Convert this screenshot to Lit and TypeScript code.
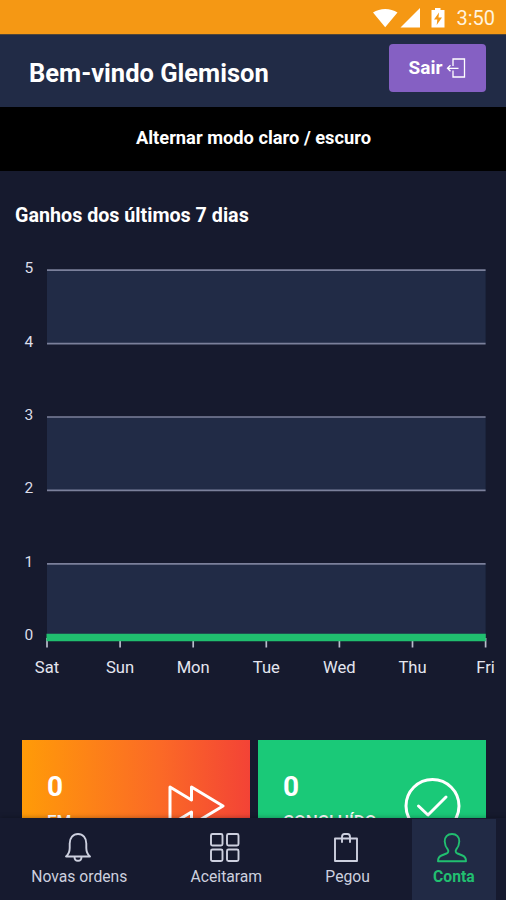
import { LitElement, html, svg, css } from "lit";
import { customElement } from "lit/decorators.js";

const DAYS = ["Sat", "Sun", "Mon", "Tue", "Wed", "Thu", "Fri"];
const LEVELS = [5, 4, 3, 2, 1, 0];

@customElement("earnings-chart")
class EarningsChart extends LitElement {
  static styles = css`
    :host { display: block; }
    .chart { display: block; }
    .band { fill: #212b46; }
    .line { stroke: #7b809b; stroke-width: 1.7; }
    .tick { stroke: #b9bccb; stroke-width: 1.7; }
    .series { stroke: #20bf6f; stroke-width: 7.5; }
    .label { fill: #dcdeea; font: 400 15.5px Roboto, sans-serif; }
    .day { fill: #e4e6f0; font: 400 16.6px Roboto, sans-serif; text-anchor: middle; }
  `;
  render() {
    const y = (v: number) => 20.2 + (5 - v) * 73.4;
    const x = (i: number) => 47 + i * 73.1;
    return html`<svg class="chart" width="506" height="440" viewBox="0 0 506 440">
      ${[5, 3, 1].map((v) => svg`<rect class="band" x="47" y=${y(v)} width="438.6" height="73.4"></rect>`)}
      ${LEVELS.slice(0, 5).map((v) => svg`<line class="line" x1="47" x2="485.6" y1=${y(v)} y2=${y(v)}></line>`)}
      ${LEVELS.map((v) => svg`<text class="label" x="24.5" y=${y(v) + 3}>${v}</text>`)}
      ${DAYS.map((d, i) => svg`<line class="tick" x1=${x(i)} x2=${x(i)} y1="388" y2="397.5"></line>
        <text class="day" x=${x(i)} y="423">${d}</text>`)}
      <line class="series" x1="46.5" x2="485.8" y1="387.5" y2="387.5"></line>
    </svg>`;
  }
}

const bell = svg`<path d="M3 24.5H27C24.3 22.3 23.3 20 23.3 16V11.5C23.3 6 20 2 15 2S6.7 6 6.7 11.5V16C6.7 20 5.7 22.3 3 24.5ZM11.5 25C11.5 27.3 13 28.8 15 28.8S18.5 27.3 18.5 25"></path>`;
const grid = svg`<rect x="1" y="2" width="11.5" height="11.5" rx="1.5"></rect><rect x="17" y="2" width="11.5" height="11.5" rx="1.5"></rect><rect x="1" y="17.5" width="11.5" height="11.5" rx="1.5"></rect><rect x="17" y="17.5" width="11.5" height="11.5" rx="1.5"></rect>`;
const bag = svg`<path d="M4 6.500H26V29H4ZM11 10V5C11 3 12 2 13.500 2H16.500C18 2 19 3 19 5V10"></path>`;
const person = svg`<path d="M15 2C19.600 2 22.500 5 22.300 9.500C22.100 13 21 15.500 19.200 17.500C18.200 19 18.600 20.800 20.500 21.500L25.500 23.500C28 24.500 29 26 29 29.300H1C1 26 2 24.500 4.500 23.500L9.500 21.500C11.400 20.800 11.800 19 10.800 17.500C9 15.500 7.900 13 7.700 9.500C7.500 5 10.400 2 15 2Z"></path>`;

const TABS = [
  { label: "Novas ordens", icon: bell, cls: "tab" },
  { label: "Aceitaram", icon: grid, cls: "tab" },
  { label: "Pegou", icon: bag, cls: "tab" },
  { label: "Conta", icon: person, cls: "tab active" },
];

@customElement("tab-bar")
class TabBar extends LitElement {
  static styles = css`
    :host { display: flex; justify-content: space-between; box-sizing: border-box; height: 82px; padding: 0 10px; background: #161a2f; box-shadow: 0 0 5px rgba(0, 0, 0, 0.35); }
    .tab { display: flex; flex-direction: column; align-items: center; padding: 13px 21.3px 0; margin-top: 1px; color: #cdd0df; font: 400 15.7px/20px Roboto, sans-serif; white-space: nowrap; }
    .icon { display: block; width: 30px; height: 31px; margin: 0 3px 4px 0; fill: none; stroke: currentColor; stroke-width: 1.9; stroke-linejoin: round; stroke-linecap: round; }
    .active { background: #212a45; color: #21bf70; font-weight: 700; }
  `;
  render() {
    return TABS.map((t) => html`<div class=${t.cls}>
      <svg class="icon" viewBox="0 0 30 31">${t.icon}</svg><span>${t.label}</span>
    </div>`);
  }
}

@customElement("app-root")
class AppRoot extends LitElement {
  static styles = css`
    :host { display: flex; flex-direction: column; width: 506px; height: 900px; overflow: hidden; background: #161a2e; color: #fff; font-family: Roboto, sans-serif; }
    .status { display: flex; flex: none; align-items: center; justify-content: flex-end; box-sizing: border-box; height: 34px; padding: 2px 11px 0 0; background: #f59814; color: #fff3df; font-size: 20px; }
    .status-icons { display: block; margin-right: 9px; fill: #fff; }
    .bolt { fill: #f59814; }
    .header { display: flex; flex: none; align-items: center; justify-content: space-between; box-sizing: border-box; height: 73px; padding: 0 20px 7px 29px; background: #212b46; border-top: 1px solid #514638; }
    .welcome { margin: 0; padding-top: 11px; font-size: 25.5px; font-weight: 700; line-height: 30px; }
    .logout { display: flex; align-items: center; justify-content: center; gap: 4px; width: 97px; height: 48px; padding: 0; border: 0; border-radius: 4px; background: #8560c3; color: #fff; font: 700 19px Roboto, sans-serif; }
    .exit { display: block; fill: none; stroke: #fff; stroke-width: 1.3; }
    .toggle { display: flex; flex: none; align-items: center; justify-content: center; box-sizing: border-box; height: 63.5px; padding: 0 0 2px 1px; background: #000; font-size: 18.3px; font-weight: 700; }
    .main { flex: 1; min-height: 0; overflow: hidden; }
    .title { margin: 0; padding: 33px 15px 0; height: 46.5px; font-size: 19.7px; font-weight: 700; line-height: 24px; }
    .cards { display: grid; grid-template-columns: 228px 228px; gap: 8px; padding: 50px 0 0 22px; }
    .card { display: flex; justify-content: space-between; box-sizing: border-box; height: 130px; padding: 30px 25px 0; }
    .pending { background: linear-gradient(90deg, #ff9b08, #fb6a26 60%, #f34336); }
    .done { background: #1ac978; }
    .count { font-size: 28px; font-weight: 700; line-height: 34px; }
    .caption { padding-top: 6px; font-size: 17px; font-weight: 500; line-height: 22px; }
    .mark { display: block; margin-top: 8px; fill: none; stroke: #fff; stroke-width: 3; stroke-linejoin: round; stroke-linecap: round; }
  `;
  render() {
    return html`
      <div class="status">
        <svg class="status-icons" width="74" height="20" viewBox="0 0 74 20">
          <path d="M0 4.500C7 -.3 17.500 -.3 24.500 4.500L12.200 19.300ZM27.500 19.500L47 0V19.500ZM58.500 2H62V0H67.500V2H71.500V19.500H58.500Z"></path>
          <path class="bolt" d="M66 4.500L61 11.500H64.300L63.700 17L69 9.500H65.500Z"></path>
        </svg>
        <span>3:50</span>
      </div>
      <header class="header">
        <h1 class="welcome">Bem-vindo Glemison</h1>
        <button class="logout">Sair
          <svg class="exit" width="20" height="20" viewBox="0 0 20 20"><path d="M7 8V1H18.500V19H7V12.500M1.500 10.300H12.500M4.500 7.300L1.500 10.300L4.500 13.300"></path></svg>
        </button>
      </header>
      <div class="toggle">Alternar modo claro / escuro</div>
      <main class="main">
        <h2 class="title">Ganhos dos últimos 7 dias</h2>
        <earnings-chart></earnings-chart>
        <section class="cards">
          <article class="card pending">
            <div><div class="count">0</div><div class="caption">EM</div></div>
            <svg class="mark" width="57" height="56" viewBox="0 0 57 56"><path d="M2 9L23.500 22V9L55 28L23.500 47V34L2 47Z"></path></svg>
          </article>
          <article class="card done">
            <div><div class="count">0</div><div class="caption">CONCLUÍDO</div></div>
            <svg class="mark" width="57" height="56" viewBox="0 0 57 56"><circle cx="28.500" cy="28" r="26.500"></circle><path d="M14.500 28L24 37L42 19"></path></svg>
          </article>
        </section>
      </main>
      <tab-bar></tab-bar>
    `;
  }
}
